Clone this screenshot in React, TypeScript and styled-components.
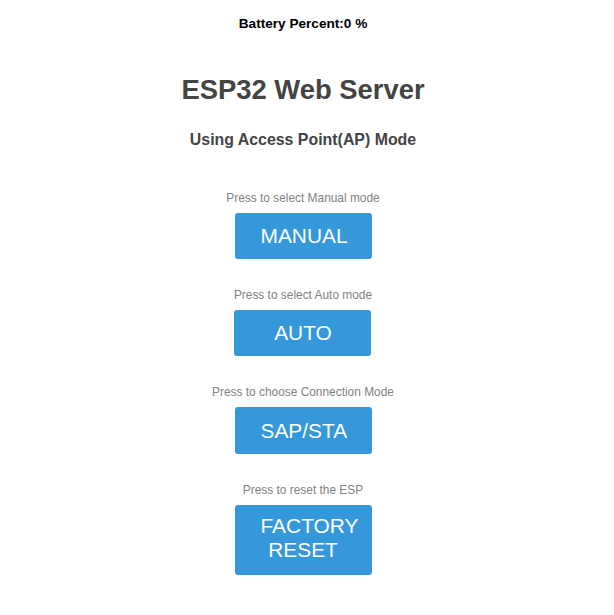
import React from "react";
import styled, { createGlobalStyle } from "styled-components";

const GlobalStyle = createGlobalStyle`
  html, body {
    margin: 0;
    padding: 0;
    background: #ffffff;
  }
  body {
    font-family: "Liberation Sans", Arial, Helvetica, sans-serif;
  }
`;

const Page = styled.main`
  display: flex;
  flex-direction: column;
  align-items: center;
  text-align: center;
  padding: 16px 8px 40px 0;
  font-family: "Liberation Sans", Arial, Helvetica, sans-serif;
`;

const Battery = styled.h4`
  margin: 0;
  font-size: 13.6px;
  line-height: 16px;
  font-weight: bold;
  color: #000000;
`;

const Title = styled.h1`
  margin: 41.6px 0 0;
  font-size: 27.4px;
  line-height: 32px;
  font-weight: bold;
  color: #444444;
`;

const Subtitle = styled.h3`
  margin: 25.4px 0 0;
  font-size: 15.9px;
  line-height: 18px;
  font-weight: bold;
  color: #444444;
`;

const Controls = styled.section`
  display: flex;
  flex-direction: column;
  align-items: center;
  gap: 29px;
  margin-top: 41.6px;
`;

const Control = styled.div`
  display: flex;
  flex-direction: column;
  align-items: center;
  gap: 8px;
`;

const Hint = styled.p`
  margin: 0;
  font-size: 11.9px;
  line-height: 14px;
  color: #828282;
`;

const ModeButton = styled.button<{ $multiLine?: boolean }>`
  box-sizing: content-box;
  width: 85px;
  padding: ${(p) => (p.$multiLine ? "9.5px 26px 14px" : "11.5px 26px")};
  border: none;
  border-radius: 3px;
  background-color: #3498db;
  color: #ffffff;
  font-family: "Liberation Sans", Arial, Helvetica, sans-serif;
  font-size: 20.9px;
  line-height: 23.4px;
  text-align: center;
  cursor: pointer;
`;

const controls = [
  { hint: "Press to select Manual mode", label: "MANUAL" },
  { hint: "Press to select Auto mode", label: "AUTO" },
  { hint: "Press to choose Connection Mode", label: "SAP/STA" },
  { hint: "Press to reset the ESP", label: "FACTORY RESET", multiLine: true },
];

export default function App() {
  return (
    <>
      <GlobalStyle />
      <Page>
        <Battery>Battery Percent:0 %</Battery>
        <Title>ESP32 Web Server</Title>
        <Subtitle>Using Access Point(AP) Mode</Subtitle>
        <Controls>
          {controls.map((c) => (
            <Control key={c.label}>
              <Hint>{c.hint}</Hint>
              <ModeButton $multiLine={c.multiLine}>{c.label}</ModeButton>
            </Control>
          ))}
        </Controls>
      </Page>
    </>
  );
}
